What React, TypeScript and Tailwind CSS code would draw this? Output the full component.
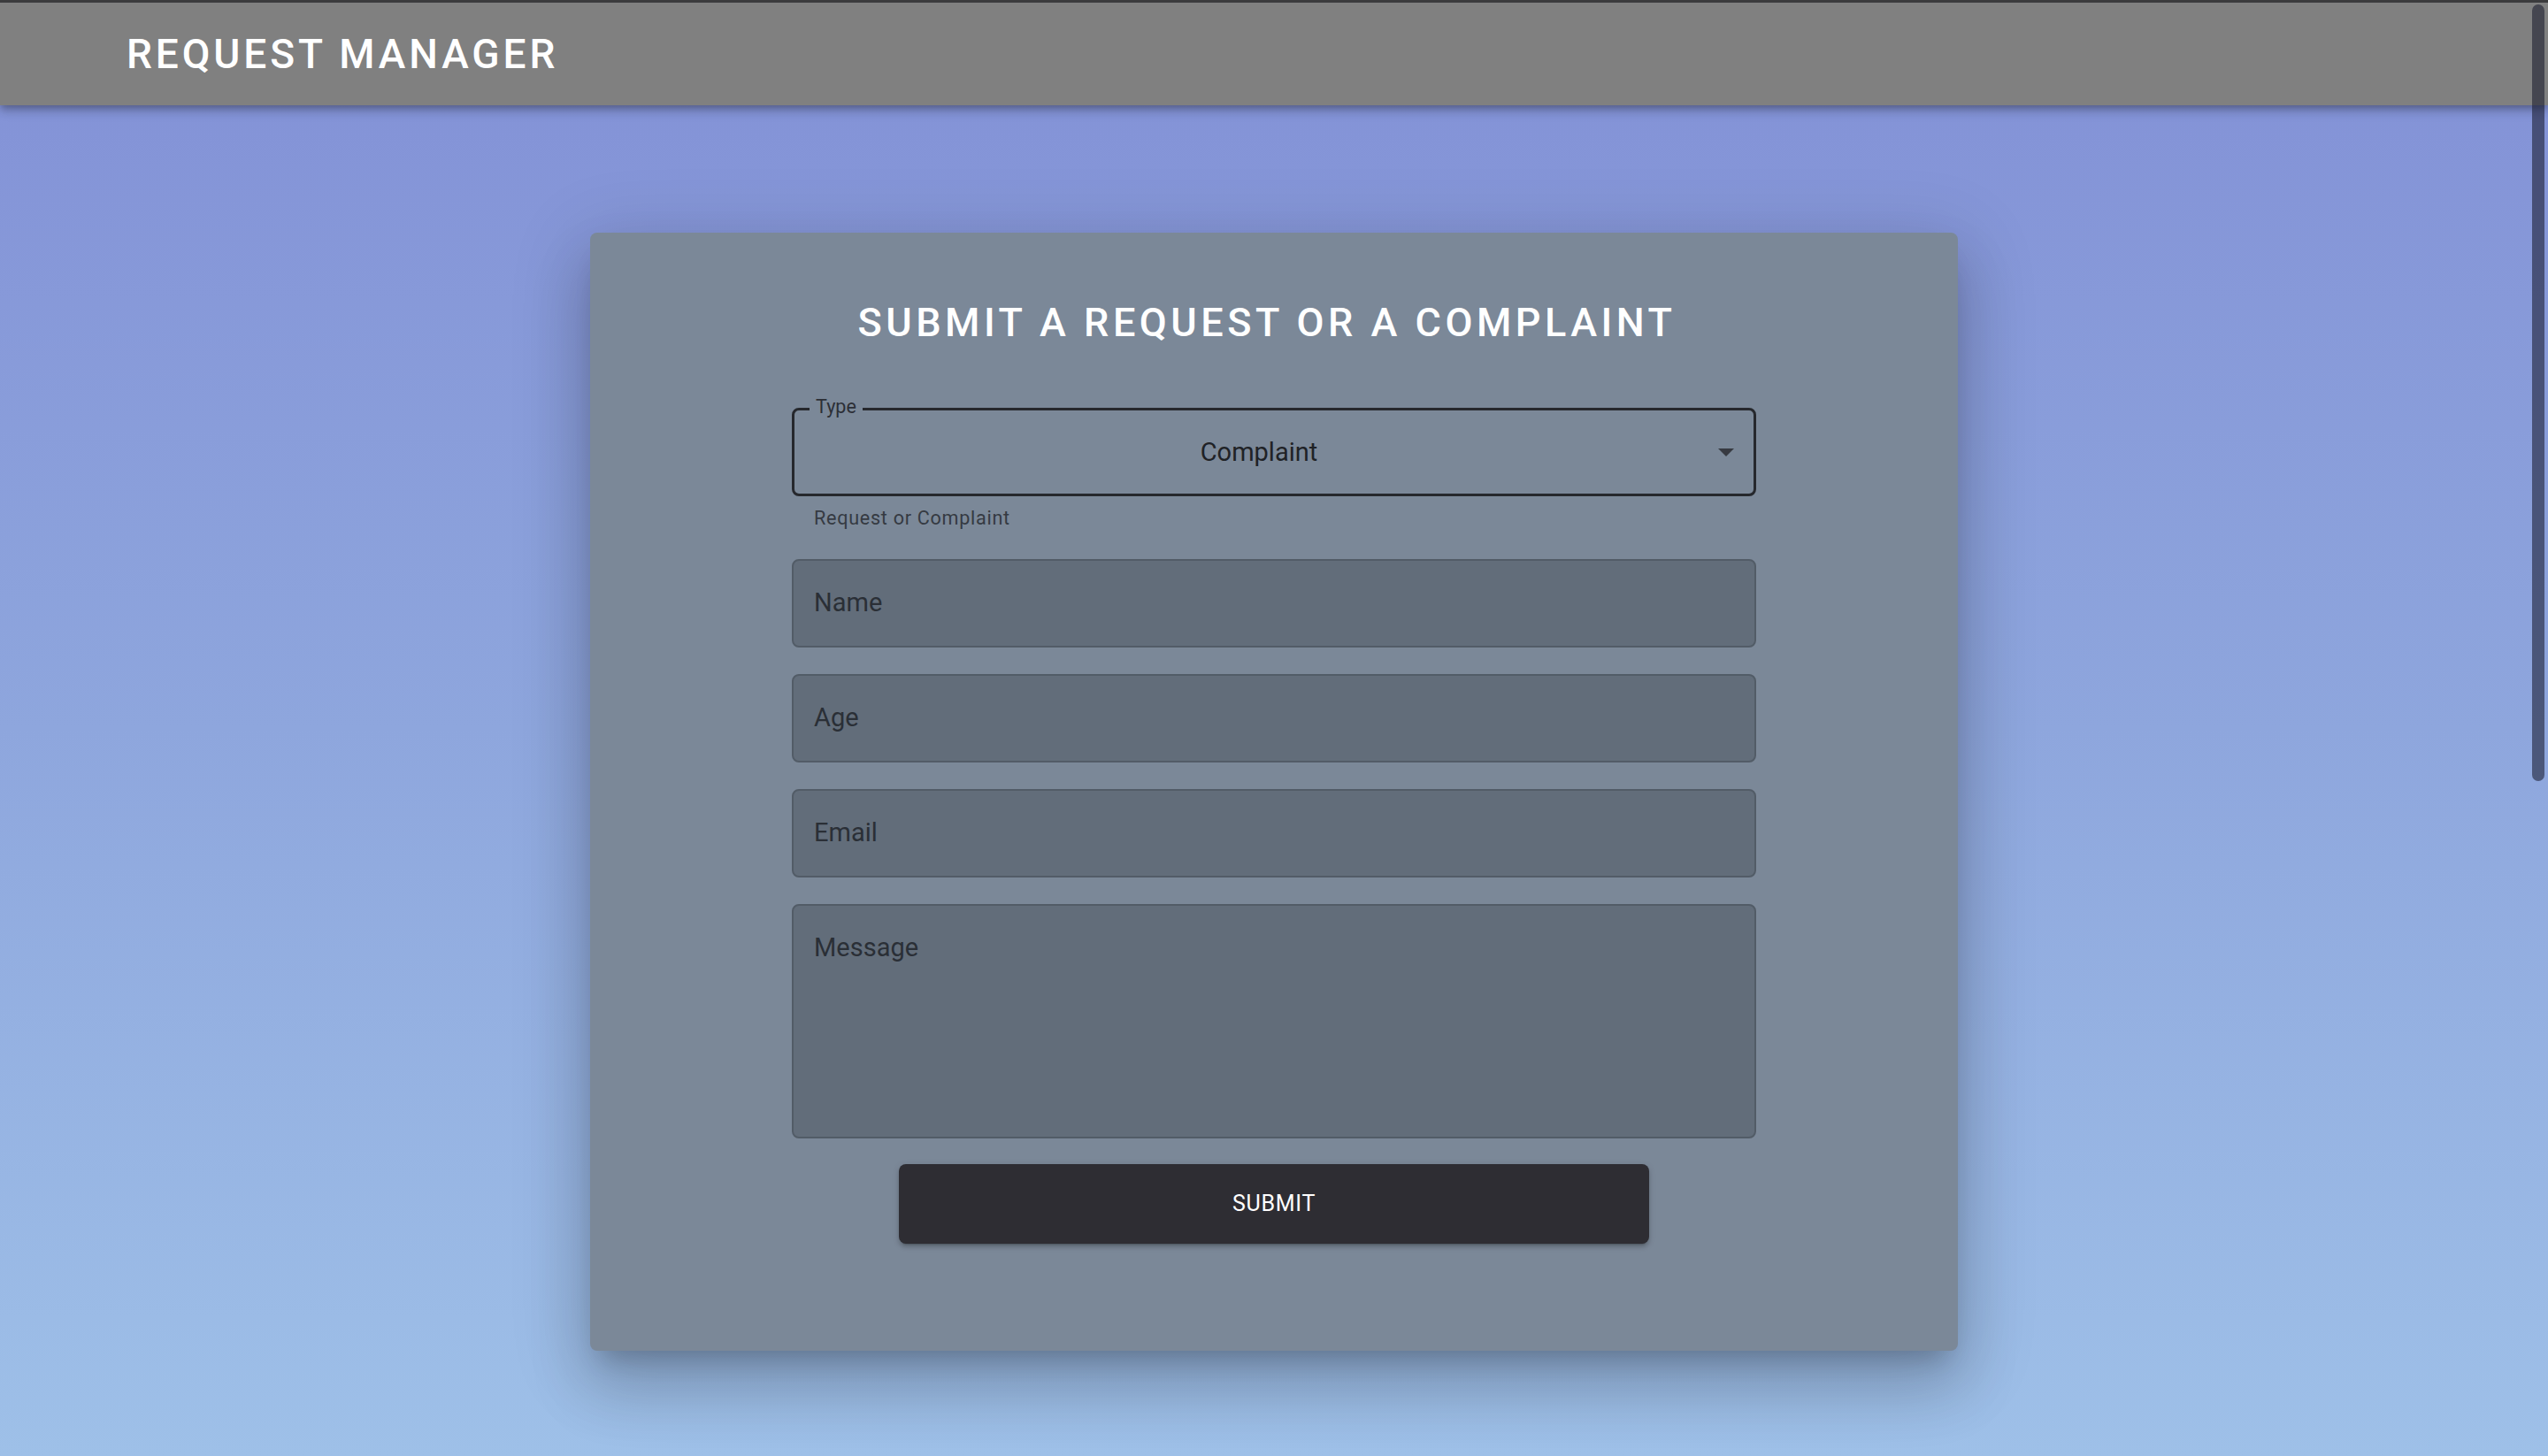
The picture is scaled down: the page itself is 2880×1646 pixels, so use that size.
import React from "react";

const Field = ({ label, tall }: { label: string; tall?: boolean }) => (
  <div
    className={`w-full ${tall ? "h-[265px]" : "h-[100px]"} rounded-[8px] border-2 border-[#525c67] bg-[#626d7a] pl-[23px] pt-[30px]`}
  >
    <div className="text-[29px] leading-[34px] text-[#2a2f36]">{label}</div>
  </div>
);

export default function App() {
  return (
    <div
      className="relative h-[1646px] w-full overflow-hidden bg-[linear-gradient(180deg,#8290d6_0%,#8ea6dd_50%,#9ec0e8_100%)]"
      style={{ fontFamily: "Roboto, 'Liberation Sans', sans-serif" }}
    >
      <header className="relative z-10 flex h-[119px] items-center border-t-[3px] border-[#3b3b3d] bg-[#808080] pl-[143px] shadow-[0_4px_7px_-2px_rgba(0,0,0,0.2),0_7px_9px_0_rgba(0,0,0,0.14),0_2px_18px_0_rgba(0,0,0,0.12)]">
        <h1 className="text-[46px] font-medium leading-none tracking-[0.085em] text-white">
          REQUEST MANAGER
        </h1>
      </header>

      <main className="flex justify-center pt-[144px]">
        <section className="w-[1546px] rounded-[8px] bg-[#7b8898] px-[228px] pb-[121px] pt-[74px] shadow-[0_20px_27px_-13px_rgba(0,0,0,0.2),0_43px_68px_5px_rgba(0,0,0,0.14),0_16px_83px_14px_rgba(0,0,0,0.12)]">
          <h2 className="pr-[16px] text-center text-[45px] font-medium leading-[55px] tracking-[0.1em] text-white">
            SUBMIT A REQUEST OR A COMPLAINT
          </h2>

          <div className="mt-[69px]">
            <div className="relative flex h-[100px] items-center rounded-[8px] border-[3px] border-[#26282d] pl-[22px]">
              <span className="absolute left-[17px] top-[-15px] bg-[#7b8898] px-[7px] text-[21.6px] leading-[22px] text-[#2c2f36]">
                Type
              </span>
              <span className="flex-1 text-center text-[29px] leading-[34px] text-[#1f2226]">
                Complaint
              </span>
              <svg
                className="ml-[16px] mr-[22px] h-[9px] w-[18px]"
                viewBox="0 0 10 5"
                fill="#373a41"
              >
                <path d="M0 0l5 5 5-5z" />
              </svg>
            </div>
            <p className="ml-[25px] mt-[7px] text-[21.6px] leading-[36px] tracking-[0.033em] text-[#353a42]">
              Request or Complaint
            </p>
          </div>

          <div className="mt-[28px] flex flex-col gap-[30px]">
            <Field label="Name" />
            <Field label="Age" />
            <Field label="Email" />
            <Field label="Message" tall />
          </div>

          <div className="mt-[29px] flex justify-center">
            <button className="h-[90px] w-[848px] rounded-[8px] bg-[#2e2d33] text-[25px] font-normal tracking-[0.029em] text-white shadow-[0_5px_2px_-4px_rgba(0,0,0,0.2),0_4px_4px_0_rgba(0,0,0,0.14),0_2px_9px_0_rgba(0,0,0,0.12)]">
              SUBMIT
            </button>
          </div>
        </section>
      </main>

      <div className="absolute right-[4px] top-[5px] z-20 h-[878px] w-[14px] rounded-full bg-[rgba(20,22,40,0.55)]" />
    </div>
  );
}
